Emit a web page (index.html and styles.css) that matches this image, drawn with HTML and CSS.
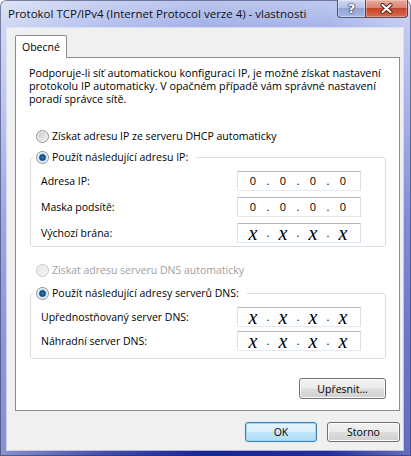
FILE: index.html
```html
<!DOCTYPE html>
<html lang="cs">
<head>
<meta charset="utf-8">
<title>Protokol TCP/IPv4 - vlastnosti</title>
<link rel="stylesheet" href="styles.css">
</head>
<body>
<div class="window">
  <div class="titlebar">
    <div class="title">Protokol TCP/IPv4 (Internet Protocol verze 4) - vlastnosti</div>
    <div class="caption">
      <div class="cbtn help"><span>?</span></div>
      <div class="cbtn close">
        <svg width="13" height="11" viewBox="0 0 13 11"><path d="M2.5 2 L10.5 9 M10.5 2 L2.5 9" stroke="#4a1f1a" stroke-width="4" stroke-linecap="round"/><path d="M2.5 2 L10.5 9 M10.5 2 L2.5 9" stroke="#ffffff" stroke-width="2.2" stroke-linecap="round"/></svg>
      </div>
    </div>
  </div>
  <div class="client">
    <div class="tabs"><div class="tab">Obecné</div></div>
    <div class="panel">
      <p class="intro">Podporuje-li síť automatickou konfiguraci IP, je možné získat nastavení<br>protokolu IP automaticky. V opačném případě vám správné nastavení<br>poradí správce sítě.</p>
      <div class="option opt-dhcp"><span class="radio"></span><span>Získat adresu IP ze serveru DHCP automaticky</span></div>
      <fieldset class="group g-ip">
        <legend><span class="radio checked"></span><span>Použít následující adresu IP:</span></legend>
        <div class="row"><span class="lbl">Adresa IP:</span><div class="ip"><span class="oct">0</span><span class="dot">.</span><span class="oct">0</span><span class="dot">.</span><span class="oct">0</span><span class="dot">.</span><span class="oct">0</span></div></div>
        <div class="row"><span class="lbl">Maska podsítě:</span><div class="ip"><span class="oct">0</span><span class="dot">.</span><span class="oct">0</span><span class="dot">.</span><span class="oct">0</span><span class="dot">.</span><span class="oct">0</span></div></div>
        <div class="row"><span class="lbl">Výchozí brána:</span><div class="ip"><span class="oct x">x</span><span class="dot">.</span><span class="oct x">x</span><span class="dot">.</span><span class="oct x">x</span><span class="dot">.</span><span class="oct x">x</span></div></div>
      </fieldset>
      <div class="option opt-dns disabled"><span class="radio"></span><span>Získat adresu serveru DNS automaticky</span></div>
      <fieldset class="group g-dns">
        <legend><span class="radio checked"></span><span>Použít následující adresy serverů DNS:</span></legend>
        <div class="row"><span class="lbl">Upřednostňovaný server DNS:</span><div class="ip"><span class="oct x">x</span><span class="dot">.</span><span class="oct x">x</span><span class="dot">.</span><span class="oct x">x</span><span class="dot">.</span><span class="oct x">x</span></div></div>
        <div class="row"><span class="lbl">Náhradní server DNS:</span><div class="ip"><span class="oct x">x</span><span class="dot">.</span><span class="oct x">x</span><span class="dot">.</span><span class="oct x">x</span><span class="dot">.</span><span class="oct x">x</span></div></div>
      </fieldset>
      <div class="adv"><button class="btn btn-adv">Upřesnit...</button></div>
    </div>
    <div class="footer">
      <button class="btn btn-default">OK</button>
      <button class="btn">Storno</button>
    </div>
  </div>
</div>
</body>
</html>
```

FILE: styles.css
```css
* { box-sizing: border-box; }
html, body { margin: 0; padding: 0; }
body {
  width: 411px;
  height: 456px;
  overflow: hidden;
  font-family: "Open Sans", "Noto Sans", sans-serif;
  font-size: 10.5px;
  color: #000;
  background: #ffffff;
}

.window {
  width: 411px;
  height: 456px;
  display: flex;
  flex-direction: column;
  padding: 0 8px 6px 7px;
  border-radius: 6px 6px 0 0;
  background:
    linear-gradient(90deg, rgba(255,255,255,0.5) 0%, rgba(255,255,255,0.2) 25%, rgba(255,255,255,0) 50%, rgba(255,255,255,0.05) 80%, rgba(255,255,255,0.35) 100%),
    linear-gradient(180deg, #bcc7ee 0px, #a2b0e8 28px, #7d8cdc 110px, #4152c4 220px, #2434b0 330px, #15239a 456px);
  box-shadow: inset 0 0 0 1px rgba(40, 50, 90, 0.55);
}

.titlebar {
  height: 28px;
  flex: none;
  display: flex;
  align-items: flex-start;
}
.title {
  padding: 6px 0 0 1px;
  line-height: 16px;
  font-size: 11.5px;
  color: #111;
  white-space: nowrap;
}
.caption {
  margin-left: auto;
  margin-right: -5px;
  display: flex;
}
.cbtn {
  height: 18px;
  display: flex;
  align-items: center;
  justify-content: center;
  border: 1px solid rgba(40, 48, 80, 0.75);
  border-top: none;
}
.help {
  width: 28px;
  border-radius: 0 0 0 4px;
  border-right: none;
  background: linear-gradient(180deg, #d2daf2 0%, #b5c1e6 45%, #95a3d6 50%, #aab8e6 100%);
  box-shadow: inset 0 0 0 1px rgba(255,255,255,0.35);
}
.help span {
  font-family: "DejaVu Sans", sans-serif;
  font-weight: bold;
  font-size: 13px;
  line-height: 14px;
  color: #fff;
  text-shadow: 0 0 1px #1c2850, 0 0 1px #1c2850, 0 0 2px #1c2850;
}
.close {
  width: 43px;
  border-radius: 0 0 4px 0;
  background: linear-gradient(180deg, #e9ad9f 0%, #d98471 45%, #c5452c 50%, #d86a4a 100%);
  box-shadow: inset 0 0 0 1px rgba(255,230,220,0.35);
}

.client {
  flex: 1;
  background: #f0f0f0;
  padding: 7px 3px 0 8px;
  display: flex;
  flex-direction: column;
  box-shadow: 0 0 0 1px rgba(230, 236, 250, 0.7);
}

.tabs {
  display: flex;
  flex: none;
}
.tab {
  width: 52px;
  height: 23px;
  margin-bottom: -1px;
  position: relative;
  z-index: 1;
  background: #fff;
  border: 1px solid #898c95;
  border-bottom: none;
  border-radius: 2px 2px 0 0;
  padding: 3px 0 0 6px;
  line-height: 16px;
}

.panel {
  height: 354px;
  flex: none;
  background: #fff;
  border: 1px solid #898c95;
  padding: 9px 13px 0 13px;
  display: flex;
  flex-direction: column;
}

.intro {
  margin: 0;
  font-size: 10.75px;
  line-height: 13px;
  white-space: nowrap;
}

.option {
  display: flex;
  align-items: center;
  gap: 3px;
  height: 16px;
  margin-left: 7px;
}
.opt-dhcp { margin-top: 22px; }
.opt-dns { margin-top: 15px; }
.disabled { color: #a0a0a0; }

.radio {
  flex: none;
  width: 13px;
  height: 13px;
  border-radius: 50%;
  border: 1px solid #8e8f8f;
  background: linear-gradient(135deg, #c4c4c4 0%, #dcdcdc 45%, #f6f6f6 100%);
  box-shadow: inset 0 0 0 1px #f4f4f4;
}
.radio.checked {
  background: radial-gradient(circle at 50% 50%, #3a8bc9 0, #1d5b95 1.6px, #17467d 2.8px, #5ea7dc 3.4px, #d9ebf7 4.2px, #f4f4f4 5.5px);
}
.disabled .radio {
  border-color: #c3c3c3;
  background: linear-gradient(135deg, #e6e6e6 0%, #f4f4f4 100%);
}

.group {
  margin: 5px 0 0 1px;
  padding: 3px 0 0 3px;
  border: 1px solid #d5dfe5;
  border-radius: 3px;
  min-width: 0;
}
.group legend {
  display: flex;
  align-items: center;
  gap: 3px;
  height: 16px;
  padding: 0 8px 0 2px;
}
.g-dns {
  margin-top: 7px;
  padding-top: 4px;
  padding-bottom: 5px;
}

.row {
  display: flex;
  align-items: center;
  height: 26px;
  padding-left: 7px;
}
.g-dns .row { height: 24px; }
.lbl {
  width: 196px;
  flex: none;
}
.ip {
  width: 124px;
  height: 20px;
  display: flex;
  align-items: center;
  padding-left: 6px;
  background: #fff;
  border: 1px solid;
  border-color: #b5b7bd #dbdfe6 #e3e9ef #e2e3ea;
  font-size: 11px;
}
.oct {
  width: 18px;
  text-align: center;
  line-height: 16px;
}
.dot {
  width: 12px;
  text-align: center;
  line-height: 16px;
}
.x {
  font-family: "Liberation Serif", "Times New Roman", serif;
  font-style: italic;
  font-size: 20px;
  line-height: 16px;
}

.adv {
  display: flex;
  justify-content: flex-end;
  margin-top: 19px;
}

.btn {
  font-family: inherit;
  font-size: 10.5px;
  color: #000;
  height: 21px;
  padding: 0;
  border: 1px solid #707070;
  border-radius: 3px;
  background: linear-gradient(180deg, #f2f2f2 0%, #ebebeb 48%, #dddddd 52%, #cfcfcf 100%);
  box-shadow: inset 0 0 0 1px #fbfbfb;
  width: 72px;
}
.btn-adv { width: 87px; }

.footer {
  display: flex;
  justify-content: flex-end;
  gap: 10px;
  margin-top: 11px;
}
.footer .btn { height: 20px; }
.footer .btn:last-child { width: 73px; }
.btn-default {
  border-color: #3c7fb1;
  background: linear-gradient(180deg, #e5f4fc 0%, #d8effb 48%, #c1e5f8 52%, #b0dcf5 100%);
  box-shadow: inset 0 0 0 1px #9fd6f2, 0 0 1px #8ad0f0;
}
```
